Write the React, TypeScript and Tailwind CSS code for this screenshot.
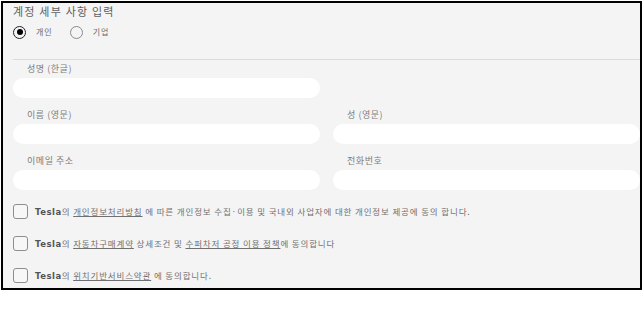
import React from 'react';

const Field = ({ label }: { label: string }) => (
  <div className="flex flex-col">
    <div className="h-[12px] pl-[14px] text-[9px] leading-[12px] tracking-[0.06em] text-[#7c7c7c]">{label}</div>
    <div className="mt-[3px] h-[20px] rounded-full bg-white" />
  </div>
);

const Check = ({ children }: { children: React.ReactNode }) => (
  <div className="flex h-[15px] items-center">
    <span className="h-[15px] w-[15px] shrink-0 rounded-[3px] border border-[#8e8e8e] bg-[#f7f7f7]" />
    <span className="ml-[7px] text-[8.5px] tracking-[0.1em] text-[#707070]">{children}</span>
  </div>
);

const Brand = () => (
  <b className="font-bold tracking-[0.06em] text-[#555]" style={{ fontFamily: '"DejaVu Sans", sans-serif' }}>
    Tesla
  </b>
);

export default function App() {
  return (
    <div className="min-h-screen bg-white" style={{ fontFamily: '"Noto Sans CJK KR", "Noto Sans", sans-serif' }}>
      <div className="ml-[1px] mt-[1px] h-[289px] w-[641px] border-2 border-black bg-[#f4f4f4] pl-[10px] pt-[1px]">
        <h2 className="h-[15px] text-[11px] leading-[15px] tracking-[0.11em] text-[#606060]">계정 세부 사항 입력</h2>

        <div className="mt-[6px] flex h-[14px] items-center text-[8px] tracking-[0.12em] text-[#6a6a6a]">
          <span className="flex h-[13px] w-[13px] items-center justify-center rounded-full border-[1.5px] border-[#222]">
            <span className="h-[6px] w-[6px] rounded-full bg-black" />
          </span>
          <span className="ml-[10px]">개인</span>
          <span className="ml-[17px] h-[13px] w-[13px] rounded-full border border-[#8a8a8a]" />
          <span className="ml-[10px]">기업</span>
        </div>

        <div className="mt-[20px] h-px bg-[#dcdcdc]" />

        <div className="mt-[3px] grid grid-cols-[307px_307px] gap-x-[13px] gap-y-[11px]">
          <Field label="성명 (한글)" />
          <div />
          <Field label="이름 (영문)" />
          <Field label="성 (영문)" />
          <Field label="이메일 주소" />
          <Field label="전화번호" />
        </div>

        <div className="mt-[14px] flex flex-col gap-[17px]">
          <Check>
            <Brand />의 <u>개인정보처리방침</u> 에 따른 개인정보 수집·이용 및 국내외 사업자에 대한 개인정보 제공에 동의 합니다.
          </Check>
          <Check>
            <Brand />의 <u>자동차구매계약</u> 상세조건 및 <u>수퍼차저 공정 이용 정책</u>에 동의합니다
          </Check>
          <Check>
            <Brand />의 <u>위치기반서비스약관</u> 에 동의합니다.
          </Check>
        </div>
      </div>
    </div>
  );
}
